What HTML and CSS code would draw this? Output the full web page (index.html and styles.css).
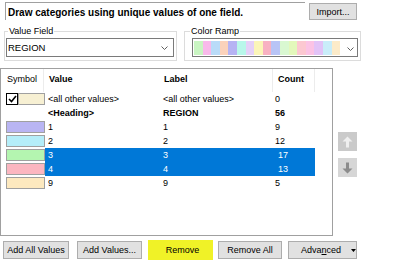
FILE: index.html
```html
<!DOCTYPE html>
<html lang="en">
  <head>
    <meta charset="UTF-8" />
    <title>Unique Values</title>
    <link rel="stylesheet" href="styles.css">
  </head>
  <body>
    <div class="top">
      <div class="desc">Draw categories using unique values of one field.</div>
      <button class="btn import">Import...</button>
    </div>

    <div class="fields">
      <fieldset class="group value-group">
        <legend>Value Field</legend>
        <div class="combo value-combo">
          <span>REGION</span>
          <svg class="chevron" width="7" height="4" viewBox="0 0 7 4"><polyline points="0.5,0.5 3.5,3.5 6.5,0.5" fill="none" stroke="#606060" stroke-width="1"/></svg>
        </div>
      </fieldset>
      <fieldset class="group ramp-group">
        <legend>Color Ramp</legend>
        <div class="combo ramp-combo">
          <div class="ramp">
            <span></span><span></span><span></span><span></span><span></span><span></span>
            <span></span><span></span><span></span><span></span><span></span><span></span>
            <span></span><span></span><span></span><span></span><span></span>
          </div>
          <svg class="chevron" width="7" height="4" viewBox="0 0 7 4"><polyline points="0.5,0.5 3.5,3.5 6.5,0.5" fill="none" stroke="#606060" stroke-width="1"/></svg>
        </div>
      </fieldset>
    </div>

    <div class="middle">
      <div class="list">
        <div class="head">
          <div class="h-sym">Symbol</div>
          <div class="h-val">Value</div>
          <div class="h-lab">Label</div>
          <div class="h-cnt">Count</div>
        </div>

        <div class="row">
          <div class="sym">
            <span class="check">
              <svg width="9" height="8" viewBox="0 0 9 8"><polyline points="1,4 3.5,6.5 8,1" fill="none" stroke="#000" stroke-width="1.6"/></svg>
            </span>
            <span class="swatch small c-all"></span>
          </div>
          <div class="val">&lt;all other values&gt;</div>
          <div class="lab">&lt;all other values&gt;</div>
          <div class="cnt">0</div>
        </div>
        <div class="row heading">
          <div class="sym"></div>
          <div class="val">&lt;Heading&gt;</div>
          <div class="lab">REGION</div>
          <div class="cnt">56</div>
        </div>
        <div class="row">
          <div class="sym"><span class="swatch c1"></span></div>
          <div class="val">1</div>
          <div class="lab">1</div>
          <div class="cnt">9</div>
        </div>
        <div class="row">
          <div class="sym"><span class="swatch c2"></span></div>
          <div class="val">2</div>
          <div class="lab">2</div>
          <div class="cnt">12</div>
        </div>
        <div class="row sel">
          <div class="sym"><span class="swatch c3"></span></div>
          <div class="val">3</div>
          <div class="lab">3</div>
          <div class="cnt">17</div>
        </div>
        <div class="row sel">
          <div class="sym"><span class="swatch c4"></span></div>
          <div class="val">4</div>
          <div class="lab">4</div>
          <div class="cnt">13</div>
        </div>
        <div class="row">
          <div class="sym"><span class="swatch c9"></span></div>
          <div class="val">9</div>
          <div class="lab">9</div>
          <div class="cnt">5</div>
        </div>
      </div>

      <div class="movers">
        <div class="mover up">
          <svg width="11" height="12" viewBox="0 0 11 12"><path d="M5.5 0.5 L10.5 5.5 L7 5.5 L7 11.5 L4 11.5 L4 5.5 L0.5 5.5 Z" fill="#efefef"/></svg>
        </div>
        <div class="mover down">
          <svg width="11" height="12" viewBox="0 0 11 12"><path d="M5.5 11.5 L10.5 6.5 L7 6.5 L7 0.5 L4 0.5 L4 6.5 L0.5 6.5 Z" fill="#8c8c8c"/></svg>
        </div>
      </div>
    </div>

    <div class="actions">
      <button class="btn add-all">Add All Values</button>
      <button class="btn add">Add Values...</button>
      <button class="btn remove">Remove</button>
      <button class="btn remove-all">Remove All</button>
      <button class="btn advanced">
        <span>Adva<u>n</u>ced</span>
        <svg width="5" height="3" viewBox="0 0 5 3"><path d="M0 0 L5 0 L2.5 3 Z" fill="#000"/></svg>
      </button>
    </div>
  </body>
</html>
```

FILE: styles.css
```css
* {
  box-sizing: border-box;
}

body {
  margin: 0;
  background-color: #fff;
  color: #000;
  font-family: "Liberation Sans", Arial, sans-serif;
  font-size: 9px;
}

.btn {
  background-color: #e1e1e1;
  border: 1px solid #adadad;
  color: #000;
  font-family: inherit;
  font-size: 9px;
  padding: 0;
  height: 18px;
}

/* top line */

.top {
  display: flex;
  align-items: flex-start;
  height: 22px;
  padding-top: 2px;
}

.desc {
  margin-left: 5px;
  width: 300px;
  height: 18px;
  border-top: 1px solid #a0a0a0;
  border-left: 1px solid #a0a0a0;
  padding: 4px 0 0 2px;
  font-size: 10px;
  font-weight: bold;
  line-height: 12px;
}

.import {
  margin-left: 4px;
  margin-top: 1px;
  width: 48px;
  height: 17px;
}

/* field + ramp */

.fields {
  display: flex;
  margin-top: 4px;
}

.group {
  margin: 0;
  padding: 0 0 3px 0;
  border: 1px solid #dcdcdc;
  min-width: 0;
}

.group legend {
  padding: 0 1px;
  line-height: 11px;
}

.value-group {
  margin-left: 4px;
  width: 173px;
}

.value-group legend {
  margin-left: 3px;
}

.ramp-group {
  margin-left: 7px;
  width: 177px;
}

.ramp-group legend {
  margin-left: 5px;
}

.combo {
  display: flex;
  align-items: center;
  justify-content: space-between;
  height: 19px;
  margin-top: 1px;
  border: 1px solid #7a7a7a;
  background-color: #fff;
}

.value-combo {
  margin-left: 1px;
  width: 168px;
  padding: 0 5px 0 1px;
  font-size: 9.5px;
}

.ramp-combo {
  margin-left: 7px;
  width: 166px;
  padding: 1px 3px 0 1px;
  align-items: flex-start;
}

.ramp-combo .chevron {
  margin-top: 7px;
}

.ramp {
  display: flex;
  width: 146px;
  height: 14px;
  margin-top: 1px;
}

.ramp span {
  flex: 1;
}

.ramp span:nth-child(1) { background-color: #c9f5c2; }
.ramp span:nth-child(2) { background-color: #f8b9ea; }
.ramp span:nth-child(3) { background-color: #b9dbf8; }
.ramp span:nth-child(4) { background-color: #fbd2bb; }
.ramp span:nth-child(5) { background-color: #b6b3f3; }
.ramp span:nth-child(6) { background-color: #b8f7ea; }
.ramp span:nth-child(7) { background-color: #e5d1f8; }
.ramp span:nth-child(8) { background-color: #fbf5b8; }
.ramp span:nth-child(9) { background-color: #f8b1c2; }
.ramp span:nth-child(10) { background-color: #b8c4f6; }
.ramp span:nth-child(11) { background-color: #d9f8d1; }
.ramp span:nth-child(12) { background-color: #e3f8bb; }
.ramp span:nth-child(13) { background-color: #fcc8d1; }
.ramp span:nth-child(14) { background-color: #fbc3e5; }
.ramp span:nth-child(15) { background-color: #e2c3f7; }
.ramp span:nth-child(16) { background-color: #c9edf9; }
.ramp span:nth-child(17) { background-color: #fcebc9; }

/* list */

.middle {
  display: flex;
  margin-top: 7px;
}

.list {
  width: 333px;
  height: 168px;
  border: 1px solid #a0a0a0;
}

.head {
  display: flex;
  height: 23px;
  line-height: 21px;
  font-weight: bold;
}

.head > div {
  border-right: 1px solid #ececec;
}

.h-sym {
  width: 43px;
  padding-left: 6px;
  font-weight: normal;
}

.h-val {
  width: 116px;
  padding-left: 5px;
  border-right: none !important;
}

.h-lab {
  width: 113px;
  padding-left: 4px;
}

.h-cnt {
  width: 42px;
  padding-left: 5px;
}

.row {
  display: flex;
  height: 14px;
  line-height: 14px;
}

.sym {
  display: flex;
  width: 44px;
  padding: 1px 0 0 5px;
}

.swatch {
  width: 39px;
  height: 12px;
  border: 1px solid #a0a0a0;
}

.swatch.small {
  width: 27px;
}

.check {
  display: flex;
  align-items: center;
  justify-content: center;
  width: 12px;
  height: 12px;
  border: 1px solid #000;
  background-color: #fff;
}

.c-all { background-color: #f7f0d3; }
.c1 { background-color: #b9b5f3; }
.c2 { background-color: #b5eef9; }
.c3 { background-color: #b4f5b0; }
.c4 { background-color: #fbb6c0; }
.c9 { background-color: #fde9bf; }

.val {
  width: 115px;
  padding-left: 3px;
}

.lab {
  width: 113px;
  padding-left: 3px;
}

.cnt {
  width: 42px;
  padding-left: 2px;
}

.heading {
  font-weight: bold;
}

.sel .val,
.sel .lab,
.sel .cnt {
  background-color: #0078d7;
  color: #fff;
}

.sel .cnt {
  padding-left: 5px;
}

.movers {
  display: flex;
  flex-direction: column;
  gap: 7px;
  margin-left: 5px;
  padding-top: 64px;
}

.mover {
  display: flex;
  align-items: center;
  justify-content: center;
  width: 19px;
  height: 19px;
}

.up {
  background-color: #cacaca;
}

.down {
  background-color: #d6d6d6;
}

/* bottom buttons */

.actions {
  display: flex;
  margin-top: 5px;
}

.add-all {
  margin-left: 3px;
  width: 66px;
}

.add {
  margin-left: 8px;
  width: 65px;
}

.remove {
  margin-left: 6px;
  width: 65px;
  height: 20px;
  margin-top: -1px;
  background-color: #f0f227;
  border-color: #f0f227;
  padding-left: 4px;
}

.remove-all {
  margin-left: 5px;
  width: 64px;
}

.advanced {
  display: flex;
  align-items: center;
  margin-left: 6px;
  width: 69px;
  padding-left: 12px;
}

.advanced svg {
  margin-left: 10px;
}
```
